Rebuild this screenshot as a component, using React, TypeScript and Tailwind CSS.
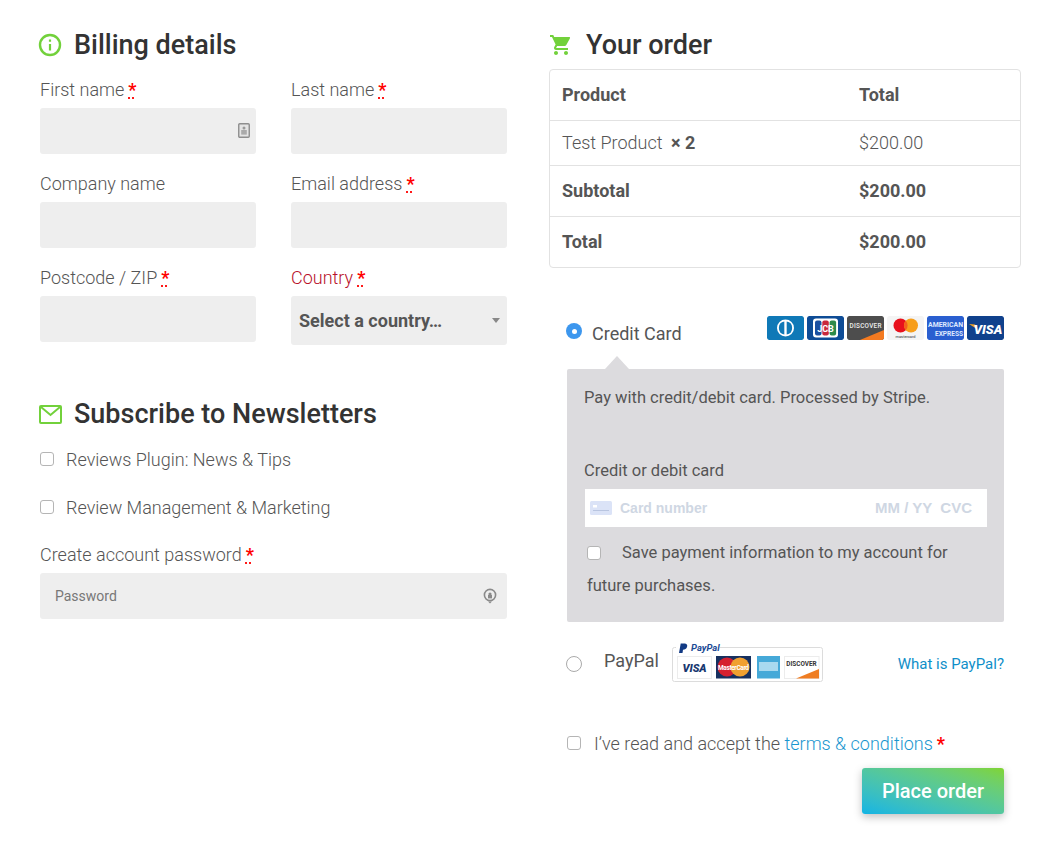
import React from "react";

function Req() {
  return <abbr className="text-[#f00] font-bold no-underline border-b-0 ml-[4px] [text-decoration:underline_dotted_#f00] [text-underline-offset:2px]">*</abbr>;
}

function Field({ label, red, req, children, h = "h-[46px]" }: { label: string; red?: boolean; req?: boolean; children?: React.ReactNode; h?: string }) {
  return (
    <div className="flex flex-col">
      <label className={`text-[18px] leading-[24px] font-light h-[30px] ${red ? "text-[#b8102a]" : "text-[#555]"}`}>
        {label}
        {req && <Req />}
      </label>
      <div className={`${h} bg-[#eee] rounded-[3px] flex items-center justify-between relative`}>{children}</div>
    </div>
  );
}

function Check({ className = "" }: { className?: string }) {
  return <input type="checkbox" className={`appearance-none w-[14px] h-[14px] shrink-0 rounded-[3px] bg-white border border-[#b5b5b5] ${className}`} />;
}

function CardIcon({ children, bg }: { children: React.ReactNode; bg: string }) {
  return (
    <svg width="37" height="24" viewBox="0 0 37 24" className="rounded-[2px]">
      <rect width="37" height="24" rx="2" fill={bg} />
      {children}
    </svg>
  );
}

function Cards() {
  return (
    <div className="flex gap-[3px]">
      <CardIcon bg="#0f79b7">
        <circle cx="18.5" cy="12" r="8.5" fill="#fff" />
        <path d="M17.3 5.5a6.6 6.6 0 0 0 0 13Z" fill="#0f79b7" />
        <path d="M19.7 5.5a6.6 6.6 0 0 1 0 13Z" fill="#0f79b7" />
      </CardIcon>
      <CardIcon bg="#0e4c96">
        <rect x="6" y="2.5" width="25" height="19" rx="3" fill="#fff" />
        <rect x="8" y="4.5" width="6.5" height="15" rx="2" fill="#1a4fa0" />
        <rect x="15.3" y="4.5" width="6.5" height="15" rx="2" fill="#c9283c" />
        <rect x="22.6" y="4.5" width="6.5" height="15" rx="2" fill="#2d8a4a" />
        <text x="18.5" y="15.5" textAnchor="middle" fontSize="9" fontWeight="700" fill="#fff" fontFamily="Roboto, sans-serif">JCB</text>
      </CardIcon>
      <CardIcon bg="#4d4d4d">
        <path d="M13 24 L37 14 V22 a2 2 0 0 1-2 2Z" fill="#f47a20" />
        <text x="18.5" y="12" textAnchor="middle" fontSize="6.4" fontWeight="500" fill="#eee" fontFamily="Roboto, sans-serif" textLength="32">DISCOVER</text>
      </CardIcon>
      <CardIcon bg="#f4f4f4">
        <circle cx="13.5" cy="9.5" r="7" fill="#e8101c" />
        <circle cx="24" cy="9.5" r="7" fill="#f79e1b" />
        <path d="M18.8 4.8a7 7 0 0 1 0 9.4a7 7 0 0 1 0-9.4Z" fill="#f4601e" />
        <text x="18.5" y="21.5" textAnchor="middle" fontSize="3.9" fill="#333" fontFamily="Roboto, sans-serif">mastercard</text>
      </CardIcon>
      <CardIcon bg="#2a5fd0">
        <text x="18.5" y="10.5" textAnchor="middle" fontSize="7" fontWeight="700" fill="#dfe9ff" fontFamily="Roboto, sans-serif" textLength="35" lengthAdjust="spacingAndGlyphs">AMERICAN</text>
        <text x="22" y="19.5" textAnchor="middle" fontSize="7" fontWeight="700" fill="#dfe9ff" fontFamily="Roboto, sans-serif" textLength="28" lengthAdjust="spacingAndGlyphs">EXPRESS</text>
      </CardIcon>
      <CardIcon bg="#10418c">
        <path d="M2 8 L8 8.5 L10 13Z" fill="#f5a623" />
        <text x="21" y="17.5" textAnchor="middle" fontSize="13" fontWeight="900" fontStyle="italic" fill="#fff" fontFamily="Roboto, sans-serif">VISA</text>
      </CardIcon>
    </div>
  );
}

function PayPalBadge() {
  return (
    <svg width="152" height="40" viewBox="0 0 152 40" className="block">
      <rect x="0.5" y="4.5" width="150" height="34" rx="2" fill="#fff" stroke="#dcdcdc" />
      <rect x="4" y="0" width="44" height="8" fill="#fff" />
      <path d="M7 10 L8.7 0.5 H13 Q16 1 15 4 Q14 6.8 11 6.8 L10.5 10Z" fill="#123a84" />
      <text x="19" y="8" fontSize="9.5" fontWeight="700" fontStyle="italic" fill="#1b4a94" fontFamily="Roboto, sans-serif">PayPal</text>
      <rect x="5.5" y="13.5" width="34" height="22" fill="#fff" stroke="#ececec" />
      <text x="22.5" y="28.5" textAnchor="middle" fontSize="11" fontWeight="900" fontStyle="italic" fill="#17376f" fontFamily="Roboto, sans-serif">VISA</text>
      <rect x="44" y="13" width="35" height="22.5" fill="#17305f" />
      <circle cx="55" cy="24" r="9.5" fill="#d5202f" />
      <circle cx="68" cy="24" r="9.5" fill="#f0a030" />
      <text x="61.5" y="26.5" textAnchor="middle" fontSize="6.5" fontWeight="700" fill="#fff" fontFamily="Roboto, sans-serif" textLength="31">MasterCard</text>
      <rect x="85" y="13" width="23" height="22.5" fill="#45a9d8" />
      <rect x="87" y="19" width="19" height="9" fill="#a8d9ef" />
      <rect x="112.5" y="13.5" width="34.5" height="22" fill="#fff" stroke="#ececec" />
      <path d="M124 35.5 L147 26 V35.5Z" fill="#ef7d22" />
      <text x="129.5" y="23" textAnchor="middle" fontSize="6.4" fontWeight="700" fill="#333" fontFamily="Roboto, sans-serif">DISCOVER</text>
    </svg>
  );
}

function Row({ a, b, bold, h, children }: { a?: string; b: string; bold?: boolean; h: string; children?: React.ReactNode }) {
  return (
    <div className={`flex items-center ${h} px-[12px] pb-[2px] text-[#555] ${bold ? "font-bold" : "font-light"} text-[18px]`}>
      <div className="w-[297px]">{children || a}</div>
      <div>{b}</div>
    </div>
  );
}

export default function App() {
  return (
    <div className="w-[1063px] h-[866px] bg-white flex pl-[40px] pt-[24px] gap-[42px] [font-family:Roboto,sans-serif] overflow-hidden">
      <div className="w-[467px] flex flex-col">
        <div className="flex items-center h-[42px]">
          <svg width="24" height="24" viewBox="0 0 24 24" className="-ml-[2px] mr-[12px]" fill="none">
            <circle cx="12" cy="12" r="10" stroke="#72d13b" strokeWidth="2.4" />
            <path d="M12 11v6.5M12 6.5v2.2" stroke="#72d13b" strokeWidth="2.2" />
          </svg>
          <h2 className="text-[27px] font-medium text-[#333]">Billing details</h2>
        </div>
        <div className="grid grid-cols-2 gap-x-[35px] mt-[12px]">
          <Field label="First name" req>
            <svg width="12" height="15" viewBox="0 0 12 15" className="absolute right-[6px] top-[15px]">
              <rect x="0.75" y="0.75" width="10.5" height="13.5" rx="1" fill="#e4e4e4" stroke="#8e8e8e" strokeWidth="1.4" />
              <circle cx="6" cy="5" r="1.5" fill="#999" />
              <rect x="3.2" y="7" width="5.6" height="4.6" fill="#aaa" />
            </svg>
          </Field>
          <Field label="Last name" req />
          <div className="col-span-2 h-[18px]" />
          <Field label="Company name" />
          <Field label="Email address" req />
          <div className="col-span-2 h-[18px]" />
          <Field label="Postcode / ZIP" req />
          <Field label="Country" req red h="h-[49px]">
            <span className="pl-[8px] text-[18px] font-bold text-[#555]">Select a country…</span>
            <span className="mr-[7px] w-0 h-0 border-x-[4px] border-x-transparent border-t-[5px] border-t-[#888]" />
          </Field>
        </div>
        <div className="flex items-center h-[42px] mt-[48px]">
          <svg width="23" height="19" viewBox="0 0 23 19" className="-ml-[1px] mr-[12px]" fill="none">
            <rect x="1" y="1" width="21" height="17" rx="1" stroke="#72d13b" strokeWidth="2" />
            <path d="M2 2l9.5 8 9.5-8" stroke="#72d13b" strokeWidth="2" />
          </svg>
          <h2 className="text-[27px] font-medium text-[#333]">Subscribe to Newsletters</h2>
        </div>
        <div className="flex items-center h-[24px] mt-[12px] text-[18px] font-light text-[#555] gap-[12px]">
          <Check />
          <span>Reviews Plugin: News &amp; Tips</span>
        </div>
        <div className="flex items-center h-[24px] mt-[24px] text-[18px] font-light text-[#555] gap-[12px]">
          <Check />
          <span>Review Management &amp; Marketing</span>
        </div>
        <div className="mt-[24px]">
          <Field label="Create account password" req>
            <span className="pl-[15px] text-[14px] text-[#777]">Password</span>
            <svg width="14" height="16" viewBox="0 0 14 16" className="mr-[10px]" fill="none">
              <circle cx="7" cy="7" r="5.6" stroke="#8a8a8a" strokeWidth="1.6" />
              <circle cx="7" cy="6" r="1.6" fill="#8a8a8a" />
              <rect x="5" y="7" width="4" height="3.4" fill="#8a8a8a" />
              <path d="M5 13.5l2 2 2-2" fill="#8a8a8a" />
            </svg>
          </Field>
        </div>
      </div>

      <div className="w-[472px] flex flex-col">
        <div className="flex items-center h-[42px]">
          <svg width="24" height="24" viewBox="0 0 24 24" className="mr-[13px]" fill="#72d13b">
            <path d="M7 18c-1.1 0-1.99.9-1.99 2S5.9 22 7 22s2-.9 2-2-.9-2-2-2zM1 2v2h2l3.6 7.59-1.35 2.45c-.16.28-.25.61-.25.96 0 1.1.9 2 2 2h12v-2H7.42c-.14 0-.25-.11-.25-.25l.03-.12.9-1.63h7.45c.75 0 1.41-.41 1.75-1.03l3.58-6.49A1 1 0 0 0 20 4H5.21l-.94-2H1zm16 16c-1.1 0-1.99.9-1.99 2s.89 2 1.99 2 2-.9 2-2-.9-2-2-2z" />
          </svg>
          <h2 className="text-[27px] font-medium text-[#333]">Your order</h2>
        </div>
        <div className="mt-[3px] border border-[#e2e2e2] rounded-[4px] divide-y divide-[#e2e2e2]">
          <Row b="Total" bold h="h-[51px]">Product</Row>
          <Row b="$200.00" h="h-[45px]">
            Test Product <strong className="font-bold ml-[4px]">× 2</strong>
          </Row>
          <Row b="$200.00" bold h="h-[51px]">Subtotal</Row>
          <Row b="$200.00" bold h="h-[50px]">Total</Row>
        </div>

        <div className="flex justify-between items-start mt-[48px] pl-[17px] pr-[17px]">
          <div className="flex items-center h-[36px] text-[18px] font-normal text-[#555]">
            <span className="w-[16px] h-[16px] -mt-[6px] rounded-full bg-[#3d97ee] flex items-center justify-center">
              <span className="w-[5px] h-[5px] rounded-full bg-white" />
            </span>
            <span className="ml-[10px] -mt-[2px]">Credit Card</span>
          </div>
          <Cards />
        </div>
        <div className="ml-[18px] mr-[17px] mt-[17px] relative bg-[#dcdbde] rounded-[2px] h-[253px] pl-[17px] pr-[17px] pt-[17px] text-[16.5px] text-[#555] leading-[24px]">
          <div className="absolute left-[38px] -top-[13px] w-0 h-0 border-x-[12px] border-x-transparent border-b-[13px] border-b-[#dcdbde]" />
          <p>Pay with credit/debit card. Processed by Stripe.</p>
          <p className="mt-[49px]">Credit or debit card</p>
          <div className="mt-[6px] ml-[1px] h-[38px] bg-white flex items-center text-[14px] font-bold text-[#cfd7e3] [font-family:'Liberation_Sans',sans-serif]">
            <svg width="22" height="14" viewBox="0 0 22 14" className="ml-[5px] mr-[8px]">
              <rect width="22" height="14" rx="1.5" fill="#dbe3f7" />
              <rect x="3" y="4" width="4" height="2.5" fill="#fff" />
              <rect x="3" y="9" width="16" height="1" fill="#b9c5e0" />
            </svg>
            <span>Card number</span>
            <span className="ml-auto text-[15px]">MM / YY</span>
            <span className="ml-[8px] mr-[15px] text-[15px]">CVC</span>
          </div>
          <div className="flex items-start mt-[12px] ml-[3px] h-[35px]">
            <Check className="mt-[7px]" />
            <span className="ml-[21px] leading-[27px]">Save payment information to my account for</span>
          </div>
          <div className="ml-[3px]">future purchases.</div>
        </div>

        <div className="flex items-center mt-[21px] pl-[17px] pr-[17px] h-[40px]">
          <span className="w-[16px] h-[16px] rounded-full bg-white border border-[#aaa] mt-[2px]" />
          <span className="ml-[22px] text-[18px] text-[#555] -mt-[5px]">PayPal</span>
          <span className="ml-[13px]"><PayPalBadge /></span>
          <span className="ml-auto text-[15px] text-[#0f8fc9] mt-[3px]">What is PayPal?</span>
        </div>

        <div className="flex items-center mt-[48px] pl-[18px] text-[18px] font-light text-[#555] h-[24px]">
          <Check />
          <span className="ml-[13px]">
            I’ve read and accept the <span className="text-[#1a96cf]">terms &amp; conditions</span>
            <span className="text-[#f00] font-bold ml-[4px]">*</span>
          </span>
        </div>
        <div className="flex justify-end pr-[17px] mt-[13px]">
          <button className="w-[142px] h-[46px] rounded-[3px] text-white text-[20px] font-medium bg-gradient-to-tr from-[#10b4e4] to-[#80d42e] shadow-[0_3px_8px_rgba(0,0,0,0.25)]">
            Place order
          </button>
        </div>
      </div>
    </div>
  );
}
